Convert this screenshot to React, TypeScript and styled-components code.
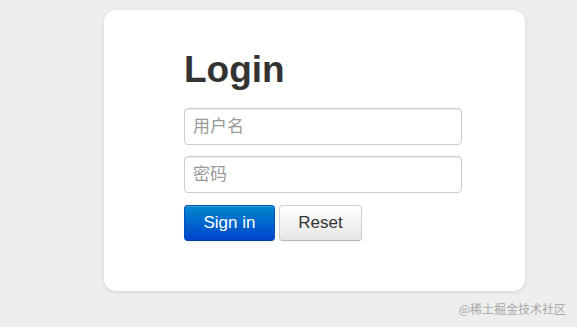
import React from "react";
import styled, { createGlobalStyle } from "styled-components";

const GlobalStyle = createGlobalStyle`
	html, body {
		margin: 0;
		padding: 0;
		background: #eeeeee;
		font-family: "Liberation Sans", Arial, "Noto Sans CJK SC", sans-serif;
	}
`;

const App = () => {
	return (
		<>
			<GlobalStyle />
			<Page>
				<Card>
					<Title>Login</Title>
					<Form onSubmit={(e) => e.preventDefault()}>
						<Input type="text" placeholder="用户名" />
						<Input type="password" placeholder="密码" />
						<Actions>
							<Button type="submit" primary>
								Sign in
							</Button>
							<Button type="reset">Reset</Button>
						</Actions>
					</Form>
				</Card>
				<Watermark>@稀土掘金技术社区</Watermark>
			</Page>
		</>
	);
};

export default App;

const Page = styled.div`
	position: relative;
	width: 577px;
	height: 327px;
	padding: 10px 0 0 104px;
	box-sizing: border-box;
`;

const Card = styled.div`
	width: 421px;
	height: 281px;
	box-sizing: border-box;
	padding: 35px 0 0 80px;
	background: #fff;
	border-radius: 12px;
	box-shadow: 0 1px 4px rgba(0, 0, 0, 0.12);
`;

const Title = styled.h1`
	margin: 0 0 13px;
	font-size: 37px;
	line-height: 50px;
	font-weight: 700;
	color: #333;
`;

const Form = styled.form`
	display: flex;
	flex-direction: column;
	gap: 11px;
	width: 278px;
`;

const Input = styled.input`
	height: 37px;
	box-sizing: border-box;
	padding: 0 8px;
	border: 1px solid #ccc;
	border-radius: 4px;
	font-family: "Liberation Sans", Arial, "Noto Sans CJK SC", sans-serif;
	font-size: 17px;
	color: #555;
	box-shadow: inset 0 1px 1px rgba(0, 0, 0, 0.075);
	outline: none;

	&::placeholder {
		color: #999;
	}
`;

const Actions = styled.div`
	display: flex;
	gap: 4px;
	margin-top: 1px;
`;

const Button = styled.button<{ primary?: boolean }>`
	height: 36px;
	width: ${(p) => (p.primary ? "91px" : "83px")};
	border-radius: 4px;
	font-family: "Liberation Sans", Arial, sans-serif;
	font-size: 17px;
	cursor: pointer;
	color: ${(p) => (p.primary ? "#fff" : "#333")};
	border-style: solid;
	border-width: 1px;
	border-color: ${(p) => (p.primary ? "#0050c0 #0050c0 #003a99" : "#d0d0d0 #d0d0d0 #b8b8b8")};
	background: ${(p) =>
		p.primary ? "linear-gradient(to bottom, #0088cc, #0044cc)" : "linear-gradient(to bottom, #ffffff, #e6e6e6)"};
	box-shadow: inset 0 1px 0 rgba(255, 255, 255, 0.2), 0 1px 2px rgba(0, 0, 0, 0.05);
`;

const Watermark = styled.div`
	position: absolute;
	right: 11px;
	bottom: 10px;
	font-family: "Noto Sans CJK SC", sans-serif;
	font-size: 12px;
	color: #a8a8a8;
`;
